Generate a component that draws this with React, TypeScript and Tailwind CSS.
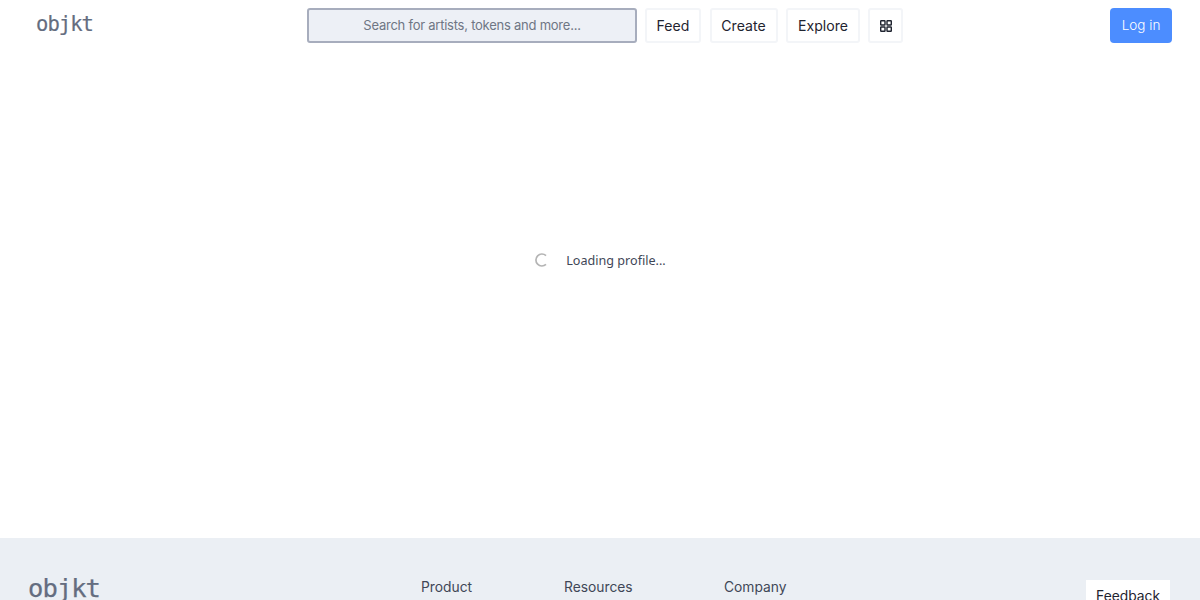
import React from "react";

const navClass = "h-[35px] flex items-center justify-center rounded-[3px] border-2 border-[#f3f5f8] bg-white text-[14.1px] text-[#1f2430]";

export default function App() {
  return (
    <div className="h-[600px] w-[1200px] overflow-hidden flex flex-col bg-white font-['Inter',sans-serif]">
      <header className="h-[538px] shrink-0 flex flex-col">
        <div className="h-[51px] shrink-0 flex items-start relative pt-[8px]">
          <div className="w-[307px] h-[35px] flex items-center pl-[36px] shrink-0 font-['DejaVu_Sans_Mono',monospace] text-[20.5px] leading-none text-[#646d80] tracking-[-0.95px] pb-[3px] [-webkit-text-stroke:0.2px_#646d80]">objkt</div>
          <div className="w-[330px] h-[35px] shrink-0 flex items-center justify-center rounded-[3px] border-2 border-[#a7adbd] bg-[#edf0f6] text-[13px] text-[#6f7684] tracking-[-0.24px]">Search for artists, tokens and more...</div>
          <div className="flex items-center gap-[8px] ml-[8px]">
            <div className={navClass + " w-[56px] mr-[1px]"}>Feed</div>
            <div className={navClass + " w-[68px] pr-[1px]"}>Create</div>
            <div className={navClass + " w-[74px]"}>Explore</div>
            <div className="h-[35px] w-[35px] flex items-center justify-center rounded-[3px] border-2 border-[#f3f5f8] bg-white">
              <svg width="14" height="14" viewBox="0 0 14 14" fill="none" stroke="#1f2430" strokeWidth="1.4">
                <rect x="1.7" y="1.7" width="4.3" height="4.3" rx="0.5" />
                <rect x="8" y="1.7" width="4.3" height="4.3" rx="0.5" />
                <rect x="1.7" y="8" width="4.3" height="4.3" rx="0.5" />
                <rect x="8" y="8" width="4.3" height="4.3" rx="0.5" />
              </svg>
            </div>
          </div>
          <div className="ml-auto mr-[28px] h-[35px] w-[62px] flex items-center justify-center rounded-[4px] bg-[#4c8dff] text-[13.5px] font-light text-white">Log in</div>
        </div>
        <div className="flex-1 flex items-start justify-center pt-[201px]">
          <div className="flex items-center gap-[18px]">
            <svg width="14" height="14" viewBox="0 0 14 14" fill="none" stroke="#b4b4b4" strokeWidth="1.7" className="-mt-[2px]">
              <path d="M12 2.6A6 6 0 1 0 12 11.4" strokeLinecap="butt" />
            </svg>
            <span className="font-['Noto_Sans',sans-serif] text-[12.6px] text-[#3f4757]">Loading profile...</span>
          </div>
        </div>
      </header>
      <footer className="flex-1 bg-[#ebeff4] relative flex items-start pt-[39px]">
        <div className="w-[421px] pl-[28px] shrink-0 font-['DejaVu_Sans_Mono',monospace] text-[25.5px] leading-[20px] mt-[1px] text-[#646d80] tracking-[-0.95px] [-webkit-text-stroke:0.25px_#646d80]">objkt</div>
        <div className="w-[143px] shrink-0 text-[13.8px] leading-[20px] text-[#3f4757]">Product</div>
        <div className="w-[160px] shrink-0 text-[13.8px] leading-[20px] text-[#3f4757]">Resources</div>
        <div className="text-[13.8px] leading-[20px] text-[#3f4757]">Company</div>
        <div className="absolute left-[1086px] top-[42px] w-[84px] h-[40px] bg-white flex items-start justify-center pt-[6px] text-[13.8px] leading-[20px] text-[#1f2430]">Feedback</div>
      </footer>
    </div>
  );
}
